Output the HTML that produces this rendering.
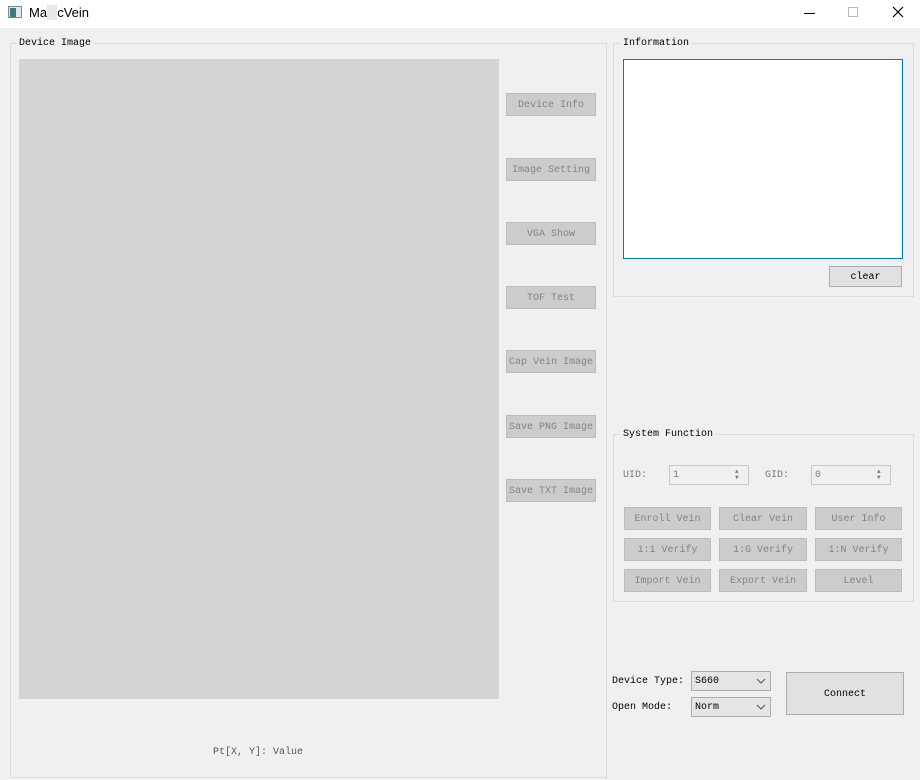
<!DOCTYPE html>
<html><head><style>
*{margin:0;padding:0;box-sizing:border-box}
body{width:920px;height:780px;background:#f0f0f0;position:relative;overflow:hidden;font-family:"Liberation Mono","Noto Serif CJK SC",monospace;font-size:10px;color:#000}
.a{position:absolute}
.tb{left:0;top:0;width:920px;height:28px;background:#fff}
.grp{border:1px solid #dcdcdc}
.gt{background:#f0f0f0;padding:0 3px;font-size:10px;line-height:12px}
.btn{background:#cccccc;border:1px solid #bcbcbc;color:#838383;text-align:center;font-size:10px;line-height:23px}
.spin{background:#f0f0f0;border:1px solid #c8c8c8;color:#7a7a7a;padding-left:3px;line-height:20px}
.combo{background:#e5e5e5;border:1px solid #adadad;padding-left:3px;line-height:20px}
</style></head><body>
<div class="a tb"></div>
<div class="a" style="left:8px;top:6px;width:14px;height:12px;border:1px solid #7a8a99;background:#dfe6ec"><div style="width:6px;height:9px;background:#3f7a7a;margin:1px"></div></div>
<div class="a" style="left:29px;top:5px;font-family:'Liberation Sans',sans-serif;font-size:13px">Ma<span style="background:#e8e8e8;color:#e8e8e8">gi</span>cVein</div>
<div class="a" style="left:804px;top:13px;width:11px;height:1px;background:#000"></div>
<div class="a" style="left:848px;top:7px;width:10px;height:10px;border:1px solid #bbb"></div>
<svg class="a" style="left:892px;top:6px" width="12" height="12"><path d="M1 1L11 11M11 1L1 11" stroke="#000" stroke-width="1.2"/></svg>

<div class="a grp" style="left:10px;top:43px;width:597px;height:735px"></div>
<div class="a gt" style="left:16px;top:38px">Device Image</div>
<div class="a" style="left:19px;top:59px;width:480px;height:640px;background:#d4d4d4"></div>
<div class="a btn" style="left:506px;top:93px;width:90px;height:23px">Device Info</div>
<div class="a btn" style="left:506px;top:158px;width:90px;height:23px">Image Setting</div>
<div class="a btn" style="left:506px;top:222px;width:90px;height:23px">VGA Show</div>
<div class="a btn" style="left:506px;top:286px;width:90px;height:23px">TOF Test</div>
<div class="a btn" style="left:506px;top:350px;width:90px;height:23px">Cap Vein Image</div>
<div class="a btn" style="left:506px;top:415px;width:90px;height:23px">Save PNG Image</div>
<div class="a btn" style="left:506px;top:479px;width:90px;height:23px">Save TXT Image</div>
<div class="a" style="left:213px;top:747px;color:#555">Pt[X, Y]: Value</div>

<div class="a grp" style="left:613px;top:43px;width:301px;height:254px"></div>
<div class="a gt" style="left:620px;top:38px">Information</div>
<div class="a" style="left:623px;top:59px;width:280px;height:200px;background:#fff;border:1px solid #0078d7"></div>
<div class="a btn" style="left:829px;top:266px;width:73px;height:21px;background:#e1e1e1;border-color:#adadad;color:#000;line-height:21px">clear</div>

<div class="a grp" style="left:613px;top:434px;width:301px;height:168px"></div>
<div class="a gt" style="left:620px;top:429px">System Function</div>
<div class="a" style="left:623px;top:470px;color:#777">UID:</div>
<div class="a spin" style="left:669px;top:465px;width:80px;height:20px">1</div>
<div class="a" style="left:765px;top:470px;color:#777">GID:</div>
<div class="a spin" style="left:811px;top:465px;width:80px;height:20px">0</div>
<div class="a" style="left:735px;top:469px;font-size:6px;line-height:6px;color:#777">▲<br>▼</div>
<div class="a" style="left:877px;top:469px;font-size:6px;line-height:6px;color:#777">▲<br>▼</div>
<div class="a btn" style="left:624px;top:507px;width:87px;height:23px">Enroll Vein</div>
<div class="a btn" style="left:719px;top:507px;width:88px;height:23px">Clear Vein</div>
<div class="a btn" style="left:815px;top:507px;width:87px;height:23px">User Info</div>
<div class="a btn" style="left:624px;top:538px;width:87px;height:23px">1:1 Verify</div>
<div class="a btn" style="left:719px;top:538px;width:88px;height:23px">1:G Verify</div>
<div class="a btn" style="left:815px;top:538px;width:87px;height:23px">1:N Verify</div>
<div class="a btn" style="left:624px;top:569px;width:87px;height:23px">Import Vein</div>
<div class="a btn" style="left:719px;top:569px;width:88px;height:23px">Export Vein</div>
<div class="a btn" style="left:815px;top:569px;width:87px;height:23px">Level</div>

<div class="a" style="left:612px;top:676px">Device Type:</div>
<div class="a combo" style="left:691px;top:671px;width:80px;height:20px">S660</div>
<div class="a" style="left:612px;top:702px">Open Mode:</div>
<div class="a combo" style="left:691px;top:697px;width:80px;height:20px">Norm</div>
<svg class="a" style="left:756px;top:678px" width="10" height="6"><path d="M1 1L5 5L9 1" stroke="#555" fill="none"/></svg>
<svg class="a" style="left:756px;top:704px" width="10" height="6"><path d="M1 1L5 5L9 1" stroke="#555" fill="none"/></svg>
<div class="a btn" style="left:786px;top:672px;width:118px;height:43px;background:#e1e1e1;border-color:#adadad;color:#000;line-height:43px">Connect</div>
</body></html>
